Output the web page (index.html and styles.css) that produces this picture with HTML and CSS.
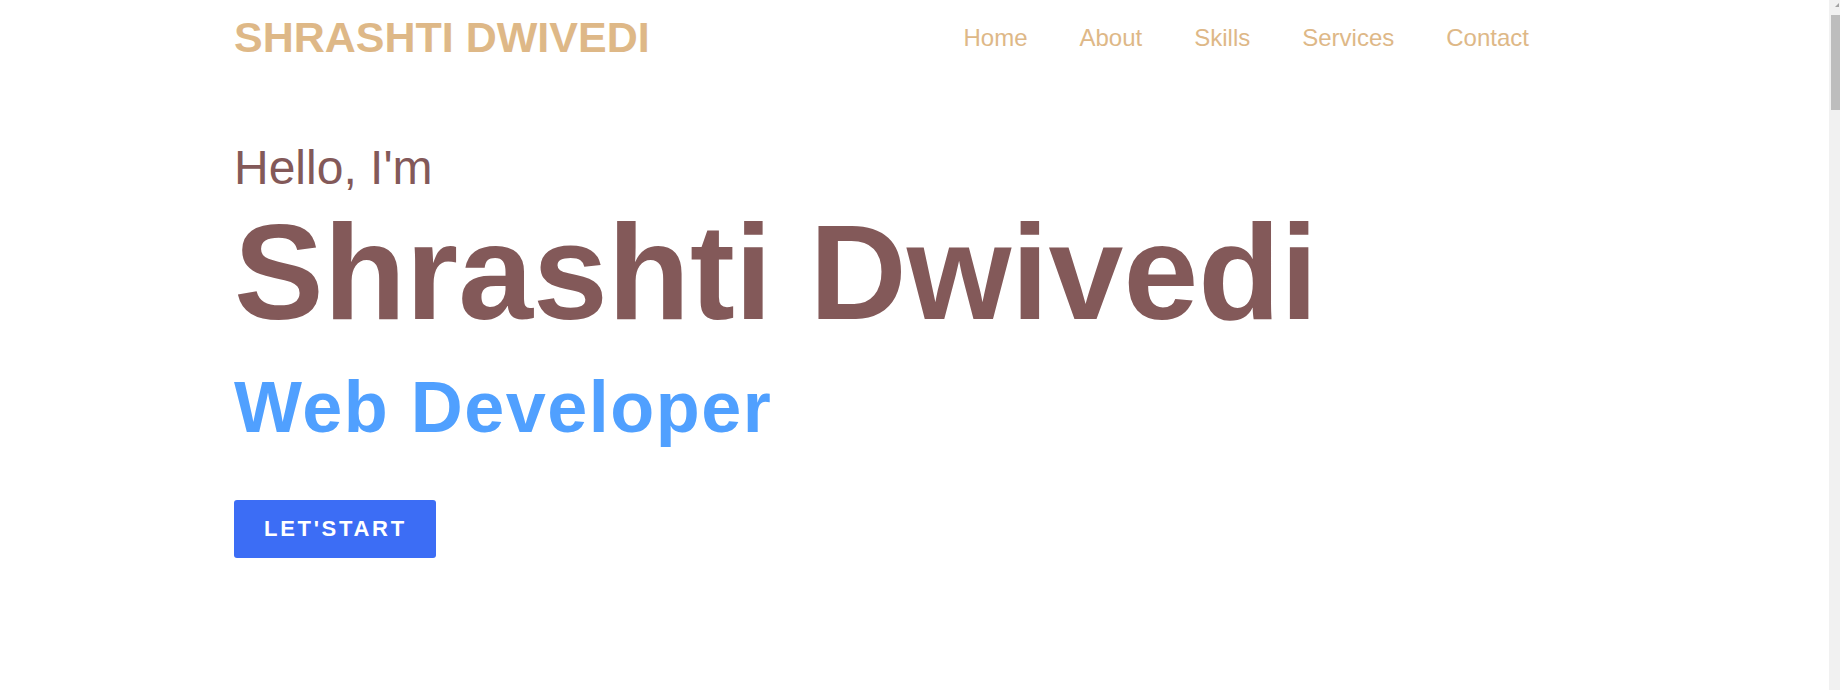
FILE: index.html
```html
<!DOCTYPE html>
<html lang="en">
<head>
<meta charset="utf-8">
<title>Shrashti Dwivedi</title>
<link rel="stylesheet" href="styles.css">
</head>
<body>
  <header class="navbar">
    <div class="logo">SHRASHTI DWIVEDI</div>
    <ul class="menu">
      <li><a href="#home">Home</a></li>
      <li><a href="#about">About</a></li>
      <li><a href="#skills">Skills</a></li>
      <li><a href="#services">Services</a></li>
      <li><a href="#contact">Contact</a></li>
    </ul>
  </header>
  <section class="home" id="home">
    <div class="home-content">
      <div class="text-1">Hello, I'm</div>
      <div class="text-2">Shrashti Dwivedi</div>
      <div class="text-3">Web Developer</div>
      <a class="btn" href="#contact">LET'START</a>
    </div>
  </section>
  <div class="scrollbar" aria-hidden="true">
    <span class="scroll-arrow"></span>
    <span class="scroll-thumb"></span>
  </div>
</body>
</html>
```

FILE: styles.css
```css
* {
  box-sizing: border-box;
}
body {
  margin: 0;
  background: #ffffff;
  font-family: "Liberation Sans", Arial, sans-serif;
}

.navbar {
  display: flex;
  align-items: center;
  justify-content: space-between;
  padding: 13px 311px 13px 234px;
}
.logo {
  font-size: 43px;
  font-weight: 700;
  color: #deb887;
  line-height: normal;
}
.menu {
  display: flex;
  gap: 52px;
  list-style: none;
  margin: 0;
  padding: 0;
}
.menu a {
  font-size: 24px;
  color: #deb887;
  text-decoration: none;
  line-height: normal;
}

.home {
  padding: 65px 234px 0;
}
.home-content {
  display: flex;
  flex-direction: column;
  align-items: flex-start;
}
.text-1 {
  font-size: 48px;
  color: #835959;
}
.text-2 {
  font-size: 134.5px;
  font-weight: 700;
  color: #835959;
}
.text-3 {
  margin-top: 16px;
  font-size: 72px;
  font-weight: 700;
  letter-spacing: 1.5px;
  color: #50a0ff;
}
.btn {
  margin-top: 52px;
  padding: 16px 29px 16px 30px;
  background: #3c6df5;
  color: #ffffff;
  font-size: 22px;
  font-weight: 700;
  letter-spacing: 2.7px;
  text-decoration: none;
  border-radius: 3px;
  line-height: normal;
}

/* static scrollbar as seen in the capture */
.scrollbar {
  position: fixed;
  top: 0;
  right: 0;
  width: 11px;
  height: 100vh;
  background: #f1f1f1;
}
.scroll-arrow {
  position: absolute;
  top: 3px;
  right: 1px;
  width: 0;
  height: 0;
  border-left: 4px solid transparent;
  border-bottom: 4px solid #a3a3a3;
}
.scroll-thumb {
  position: absolute;
  top: 15px;
  right: 0;
  width: 9px;
  height: 95px;
  background: #bdbdbd;
}
```
